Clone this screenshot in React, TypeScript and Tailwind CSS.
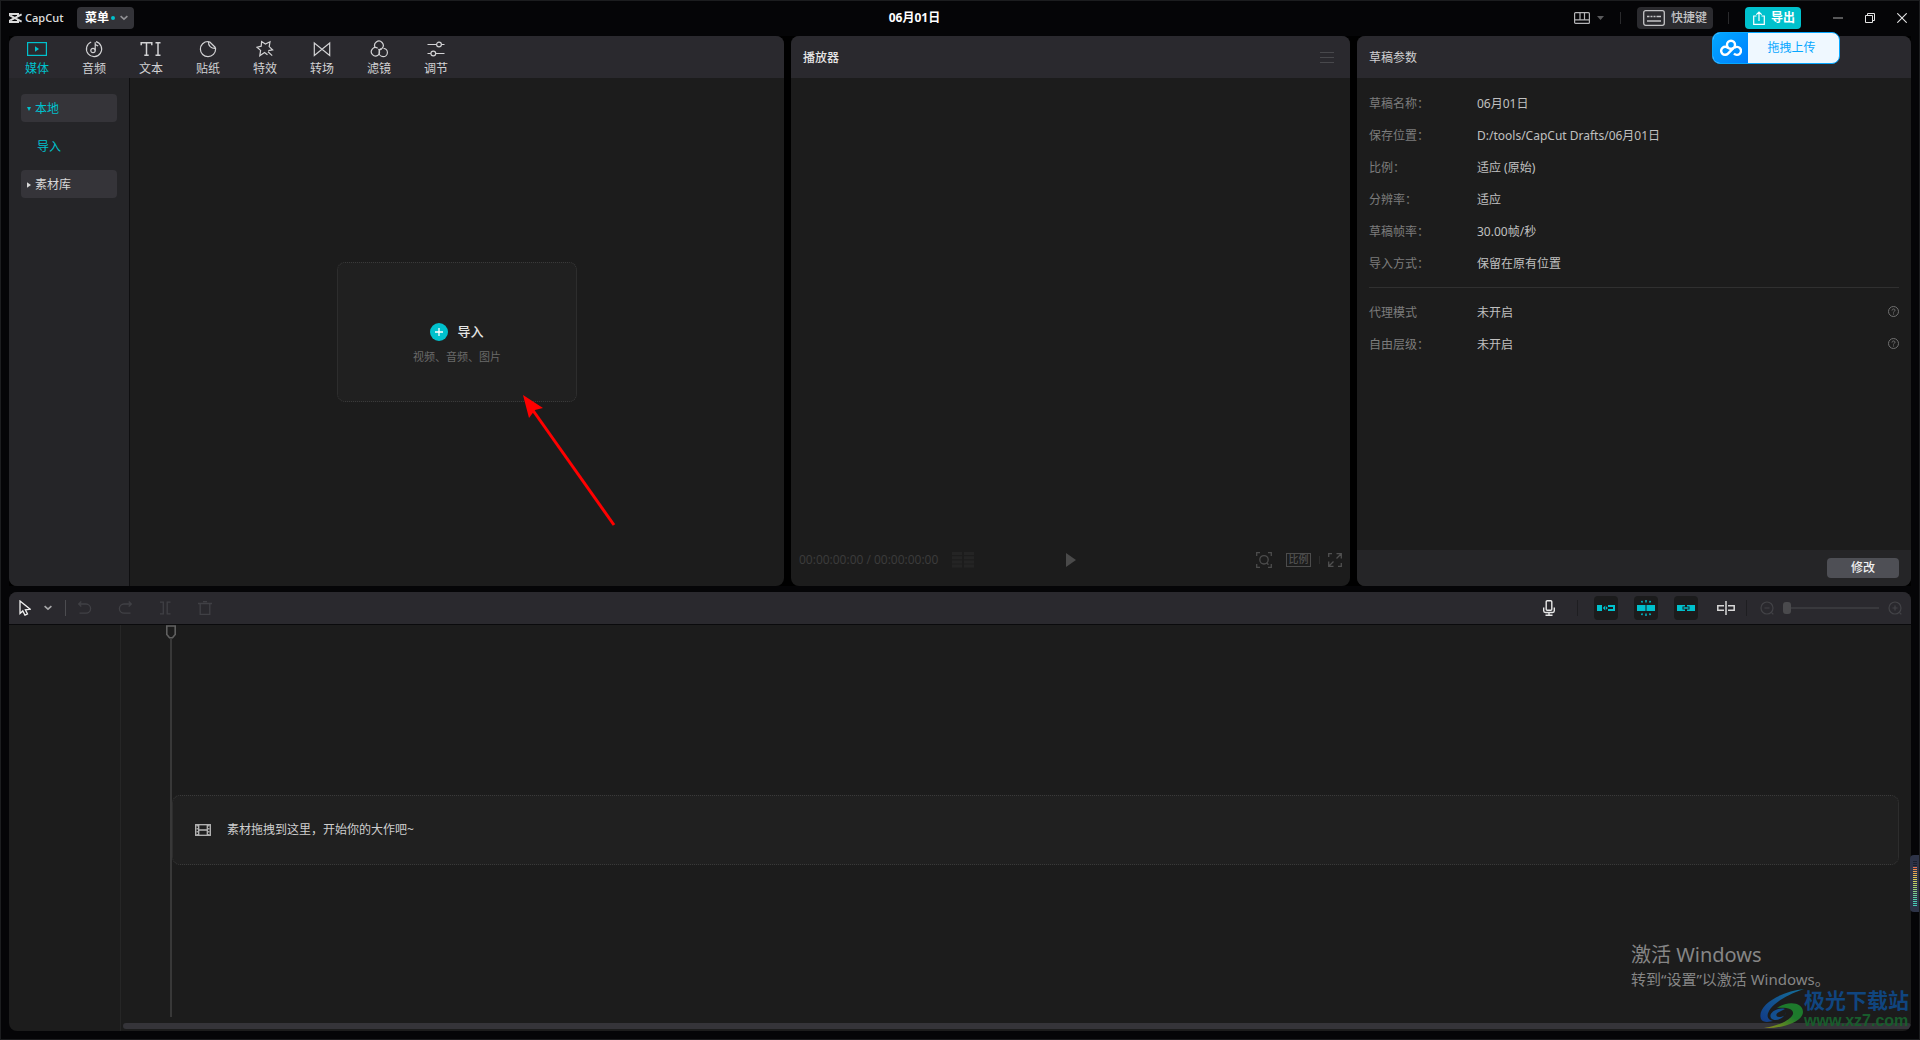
import { useState, type ReactNode } from "react";

const TABS = [
  { id: "media", label: "媒体" },
  { id: "audio", label: "音频" },
  { id: "text", label: "文本" },
  { id: "sticker", label: "贴纸" },
  { id: "effect", label: "特效" },
  { id: "transition", label: "转场" },
  { id: "filter", label: "滤镜" },
  { id: "adjust", label: "调节" },
];

const PARAMS = [
  ["草稿名称：", "06月01日"],
  ["保存位置：", "D:/tools/CapCut Drafts/06月01日"],
  ["比例：", "适应 (原始)"],
  ["分辨率：", "适应"],
  ["草稿帧率：", "30.00帧/秒"],
  ["导入方式：", "保留在原有位置"],
];

const EXTRA = [
  ["代理模式", "未开启"],
  ["自由层级：", "未开启"],
];

// level meter, top (off) to bottom
const METER = [
  "bg-[#1a1f2e]", "bg-[#1a1f2e]", "bg-[#1a1f2e]",
  "bg-[#e8714f]", "bg-[#e88a50]", "bg-[#e79c50]", "bg-[#e6ac50]", "bg-[#e3b852]", "bg-[#dfc255]",
  "bg-[#d8cb58]", "bg-[#cccf5c]", "bg-[#bfd062]", "bg-[#b2d069]", "bg-[#a4d071]", "bg-[#96cf7a]",
  "bg-[#88ce84]", "bg-[#7acd8e]", "bg-[#6ccd98]", "bg-[#5fcca2]", "bg-[#55ccaa]", "bg-[#4dccb0]",
  "bg-[#48ccb4]", "bg-[#44ccb8]",
];

export default function App() {
  return (
    <div className="relative flex h-screen flex-col overflow-hidden border border-[#1c1d1f] bg-[#050507] font-['Noto_Sans','Noto_Sans_CJK_SC',sans-serif] text-xs text-[#d8d8d8]">
      <TitleBar />
      <main className="flex min-h-0 flex-1 flex-col gap-1.5 px-2 pb-2">
        <div className="grid min-h-0 flex-[550] grid-cols-[775fr_559fr_554fr] gap-[7px] bg-black">
          <MediaPanel />
          <PlayerPanel />
          <ParamsPanel />
        </div>
        <Timeline />
      </main>
      <UploadWidget />
      <Pointer />
      <Meter />
      <ActivationNotice />
      <SiteMark />
    </div>
  );
}

function TitleBar() {
  return (
    <header className="grid h-[35px] shrink-0 grid-cols-[19fr_80px_21fr] items-center px-2 pb-px">
      <div className="flex items-center">
        <svg className="h-2.5 w-[13px]" viewBox="0 0 39 30" fill="none" stroke="#dcdcdc" strokeWidth="6">
          <path d="M2 10V3h25v7M2 20v7h25v-7" />
          <path d="M38 4 4 22M38 26 4 8" />
        </svg>
        <span className="ml-[3px] w-[38px] font-['Open_Sans',sans-serif] text-[11px] leading-4 font-semibold text-[#dcdcdc]">CapCut</span>
        <button className="ml-3.5 flex h-[22px] w-[57px] items-center rounded bg-[#333338] pl-2 font-bold text-white">
          菜单
          <span className="ml-0.5 size-1 rounded-full bg-[#00c1cd]" />
          <svg className="ml-[5px] h-1.5 w-2" viewBox="0 0 8 6" fill="none" stroke="#929296" strokeWidth="1.600">
            <path d="m.6 1.200 3.400 3 3.400-3" />
          </svg>
        </button>
      </div>
      <h1 className="text-center font-bold text-white">06月01日</h1>
      <div className="flex items-center justify-end">
        <button aria-label="布局" className="flex items-center gap-[7px]">
          <svg className="h-3 w-4" viewBox="0 0 16 12" fill="none" stroke="#b4b4b6" strokeWidth="1.200">
            <rect x=".6" y=".6" width="14.800" height="10.800" rx="1" />
            <path d="M.6 7.800h14.800M6 .6v7.200M10.500 .6v7.200" />
          </svg>
          <svg className="h-1 w-[7px]" viewBox="0 0 7 4" fill="#5a5a5c"><path d="M0 0h7L3.500 4z" /></svg>
        </button>
        <Divider className="mx-4 bg-[#2a2a2c]" />
        <button className="flex h-[22px] w-[76px] items-center rounded bg-[#2b2b2f] pl-1.5 font-medium text-[#c4c4c6]">
          <svg className="mr-1.5 h-4 w-[22px]" viewBox="0 0 22 16" fill="none" stroke="#c4c4c6" strokeWidth="1.300">
            <rect x=".7" y=".7" width="20.600" height="14.600" rx="2" />
            <path d="M4 6.500h2.500m1 0h2m1 0h2m1 0h4.500M4 11h14" />
          </svg>
          快捷键
        </button>
        <Divider className="ml-[15px] mr-4 bg-[#2a2a2c]" />
        <button className="flex h-[22px] w-14 items-center rounded bg-[#00c1cd] pl-2 font-bold text-white">
          <svg className="mr-1.5 h-3.5 w-3" viewBox="0 0 12 14" fill="none" stroke="#fff" strokeWidth="1.200">
            <path d="M3.500 5H.7v8.300h10.600V5H8.500M6 10V1.200M3.300 3.700 6 1l2.700 2.700" />
          </svg>
          导出
        </button>
        <div className="ml-8 mr-1 flex items-center gap-[22px]">
          <button aria-label="最小化">
            <svg className="size-2.5" viewBox="0 0 10 10" stroke="#7b7b7b" strokeWidth="1.400"><path d="M0 5h10" /></svg>
          </button>
          <button aria-label="还原">
            <svg className="size-2.5" viewBox="0 0 10 10" fill="none" stroke="#e4e4e4">
              <path d="M.5 2.500h7v7h-7zM2.500 2.500v-2h7v7h-2" />
            </svg>
          </button>
          <button aria-label="关闭">
            <svg className="size-2.5" viewBox="0 0 10 10" stroke="#e4e4e4" strokeWidth="1.100"><path d="m.3.3 9.400 9.400M9.700.3.3 9.700" /></svg>
          </button>
        </div>
      </div>
    </header>
  );
}

function Divider({ className }: { className: string }) {
  return <span className={`h-3 w-px shrink-0 ${className}`} />;
}

function MediaPanel() {
  const [tab, setTab] = useState("media");

  return (
    <section className="flex min-h-0 flex-col overflow-hidden rounded-lg bg-[#1c1c1c]">
      <nav className="flex h-[42px] shrink-0 bg-[#2a292e]">
        {TABS.map(t => (
          <button
            key={t.id}
            onClick={() => setTab(t.id)}
            className={`flex w-[57px] flex-col items-center pt-1 pr-px ${tab === t.id ? "text-[#00c1cd]" : "text-[#d2d2d4]"}`}
          >
            <TabIcon id={t.id} />
            <span className="leading-[22px]">{t.label}</span>
          </button>
        ))}
      </nav>
      <div className="flex min-h-0 flex-1">
        <aside className="w-[121px] shrink-0 border-r border-[#0e0e10] bg-[#252528] px-3 pt-4">
          <button className="flex h-7 w-full items-center gap-1 rounded bg-[#353439] pt-px pl-1.5 text-[#00c1cd]">
            <svg className="size-1" viewBox="0 0 4 4" fill="currentColor"><path d="M0 0h4L2 4z" /></svg>
            本地
          </button>
          <button className="flex h-12 w-full items-center pt-px pl-4 text-[#00c1cd]">导入</button>
          <button className="flex h-7 w-full items-center gap-1 rounded bg-[#353439] pt-px pl-1.5 text-[#d8d8d8]">
            <svg className="size-1 overflow-visible" viewBox="0 0 4 4" fill="currentColor"><path d="M0-.7 4 2 0 4.700z" /></svg>
            素材库
          </button>
        </aside>
        <div className="flex flex-1 items-center justify-center">
          <button className="flex h-[140px] w-60 flex-col items-center rounded-lg border border-dotted border-[#3a3a3a] bg-[#202020] pt-[60px]">
            <span className="flex h-[18px] items-center gap-[9px] text-[13px] font-medium text-[#e6e6e6]">
              <svg className="size-[18px]" viewBox="0 0 18 18">
                <circle cx="9" cy="9" r="9" fill="#00c1cd" />
                <path d="M9 5v8M5 9h8" stroke="#fff" strokeWidth="1.300" />
              </svg>
              导入
            </span>
            <span className="mt-2 text-[11px] leading-4 text-[#6a6a6a]">视频、音频、图片</span>
          </button>
        </div>
      </div>
    </section>
  );
}

function TabIcon({ id }: { id: string }) {
  const icons: Record<string, ReactNode> = {
    media: (
      <>
        <rect x="1.600" y="2.600" width="18.800" height="12.800" />
        <path d="M9 6.200v5.600L13 9z" fill="currentColor" stroke="none" />
      </>
    ),
    audio: (
      <>
        <path d="M13 1.700A7.600 7.600 0 1 1 8.200 2" />
        <circle cx="10" cy="10.500" r="2.200" />
        <path d="M12.200 10.500V2.200M12.200 4.500l3 1.500" />
      </>
    ),
    text: (
      <path d="M1.200 5.200V2.800h10.600v2.400M6.500 2.800v12.400M4.300 15.200h4.400M15.500 2.800h5M15.500 15.200h5M18 2.800v12.400" strokeWidth="1.500" />
    ),
    sticker: (
      <path d="M11 1.500A7.600 7.600 0 1 0 18.600 9c0-.8-.2-1.300-.5-1.800L12.800 2c-.6-.3-1.200-.5-1.800-.5ZM11.500 1.600c-.4 4 2.500 7 7 6.800" />
    ),
    effect: (
      <path d="M13.500 14.800 10.500 12.600 5.800 15.800 6.600 10.400 3 7.200 7.200 6.200 7.600 1.600 11.400 4 16 1.800 15.200 6.600 18.600 9.800 14.300 10.600M14 11.800l4.200 3.800" />
    ),
    transition: <path d="M3.300 3v12.400L18.700 3v12.400z" />,
    filter: (
      <>
        <path d="M7.200 7.600A4.300 4.300 0 1 1 14.200 8.200C13.400 9.500 12 10 10.800 9.900" />
        <path d="M9.700 8.200A4.200 4.200 0 1 0 10 15.200M11 12.500a4.200 4.200 0 1 0 4.500-4.200" />
        <path d="M10 15.200c1.800-1.400 2.200-4.200.5-6.200M11 12.500c0-2 1-3.600 2.500-4" />
      </>
    ),
    adjust: (
      <>
        <path d="M2.500 4.500h9M16.500 4.500h3M2.500 13.500h3.300M10.800 13.500h8.700" />
        <circle cx="14" cy="4.500" r="2.400" />
        <circle cx="8.300" cy="13.500" r="2.400" />
      </>
    ),
  };

  return (
    <svg className="h-[18px] w-[22px] shrink-0" viewBox="0 0 22 18" fill="none" stroke="currentColor" strokeWidth="1.200">
      {icons[id]}
    </svg>
  );
}

function PlayerPanel() {
  return (
    <section className="flex min-h-0 flex-col overflow-hidden rounded-lg bg-[#1c1c1c]">
      <div className="flex h-[42px] shrink-0 items-center justify-between bg-[#2a292e] pt-px pl-3 pr-4">
        <h2 className="font-medium text-[#e6e6e6]">播放器</h2>
        <button aria-label="播放器菜单">
          <svg className="h-3 w-3.5" viewBox="0 0 14 12" stroke="#48484c"><path d="M0 .5h14M0 5.500h14M0 10.500h14" /></svg>
        </button>
      </div>
      <div className="flex-1" />
      <div className="grid h-[52px] shrink-0 grid-cols-[1fr_auto_1fr] items-center pb-px pl-2 pr-2 text-[#3c3c3c]">
        <div className="flex items-center gap-3.5">
          <span className="font-['Open_Sans',sans-serif]">00:00:00:00 / 00:00:00:00</span>
          <svg className="h-4 w-[22px]" viewBox="0 0 22 16" stroke="#242424" strokeWidth="3">
            <path d="M0 1.500h10M0 5.700h10M0 9.900h10M0 14.100h10M12 1.500h10M12 5.700h10M12 9.900h10M12 14.100h10" />
          </svg>
        </div>
        <button aria-label="播放">
          <svg className="h-3.5 w-2.5" viewBox="0 0 10 14" fill="#4a4a4a"><path d="M0 0v14l10-7z" /></svg>
        </button>
        <div className="flex items-center justify-end">
          <button aria-label="缩放画面">
            <svg className="size-4" viewBox="0 0 16 16" fill="none" stroke="#4c4c4c" strokeWidth="1.300">
              <path d="M.7 4V.7H4M12 .7h3.300V4M.7 12v3.300H4M12 15.300h3.300V12" />
              <circle cx="8" cy="7.800" r="4.200" />
              <path d="m10.500 10.800 2 2" />
            </svg>
          </button>
          <button className="ml-3.5 flex h-3.5 w-[25px] items-center justify-center border border-[#4c4c4c] text-[10px] font-medium text-[#505050]">比例</button>
          <span className="mx-2 h-2 w-px bg-[#2c2c2c]" />
          <button aria-label="全屏">
            <svg className="size-3.5" viewBox="0 0 14 14" fill="none" stroke="#505050" strokeWidth="1.300">
              <path d="M.7 4V.7H4M10 13.300h3.300V10M8.500.7h4.800v4.800M5.500 13.300H.7V8.500M13 1 8.500 5.500M1 13l4.500-4.500" />
            </svg>
          </button>
        </div>
      </div>
    </section>
  );
}

function ParamsPanel() {
  return (
    <section className="flex min-h-0 flex-col overflow-hidden rounded-lg bg-[#1c1c1c]">
      <div className="flex h-[42px] shrink-0 items-center bg-[#2a292e] px-3 pt-px">
        <h2 className="text-[#d0d0d2]">草稿参数</h2>
      </div>
      <div className="flex-1 px-3 pt-2.5">
        <dl>
          {PARAMS.map(([k, v]) => (
            <div key={k} className="flex h-8 items-center">
              <dt className="w-[108px] text-[#7c7c7c]">{k}</dt>
              <dd className="text-[#c0c0c0]">{v}</dd>
            </div>
          ))}
        </dl>
        <hr className="mt-[7px] mb-[9px] border-[#303030]" />
        <dl>
          {EXTRA.map(([k, v]) => (
            <div key={k} className="flex h-8 items-center">
              <dt className="w-[108px] text-[#7c7c7c]">{k}</dt>
              <dd className="flex-1 text-[#c0c0c0]">{v}</dd>
              <dd>
                <button aria-label="说明" className="mb-1 block">
                  <svg className="size-[11px]" viewBox="0 0 11 11" fill="none" stroke="#707070">
                    <circle cx="5.500" cy="5.500" r="5" />
                    <path d="M4 4.500c0-2 3-2 3-.2 0 1-1.500 1-1.500 2.200M5.500 7.500v1" />
                  </svg>
                </button>
              </dd>
            </div>
          ))}
        </dl>
      </div>
      <div className="flex h-9 shrink-0 items-center justify-end bg-[#252527] px-3">
        <button className="h-5 w-[72px] rounded bg-[#4e4f55] leading-5 font-medium text-[#f0f0f0]">修改</button>
      </div>
    </section>
  );
}

function Timeline() {
  const [zoom, setZoom] = useState(0);

  return (
    <section className="flex min-h-0 flex-[439] flex-col overflow-hidden rounded-lg bg-[#1c1c1c]">
      <div className="flex h-[33px] shrink-0 items-center justify-between border-b border-[#0a0a0c] bg-[#2a292e] pl-2.5 pr-[9px]">
        <div className="flex items-center text-[#404045]">
          <button aria-label="选择">
            <svg className="h-4 w-3" viewBox="0 0 12 16" fill="none" stroke="#f0f0f0" strokeWidth="1.300">
              <path d="M1 1v12.500l2.800-2.600 2.200 4.300 2.500-1.200-2.100-4.200 4.800-.5z" />
            </svg>
          </button>
          <button aria-label="更多工具" className="ml-[13px]">
            <svg className="h-1.5 w-2" viewBox="0 0 8 6" fill="none" stroke="#a8a8aa" strokeWidth="1.600"><path d="m.6 1.200 3.400 3 3.400-3" /></svg>
          </button>
          <span className="ml-[13px] h-4 w-px bg-[#4c4c50]" />
          <div className="ml-3 flex gap-[26px]">
            <button aria-label="撤销">
              <svg className="size-3.5" viewBox="0 0 14 14" fill="none" stroke="currentColor" strokeWidth="1.300">
                <path d="M.8 3H8a4.600 4.600 0 0 1 0 9.200H1.500M3.300 .6.6 3l2.700 2.400" />
              </svg>
            </button>
            <button aria-label="重做">
              <svg className="size-3.5" viewBox="0 0 14 14" fill="none" stroke="currentColor" strokeWidth="1.300">
                <path d="M13.200 3H6a4.600 4.600 0 0 0 0 9.200h6.500M10.700 .6 13.400 3l-2.700 2.400" />
              </svg>
            </button>
            <button aria-label="分割">
              <svg className="size-3.5" viewBox="0 0 14 14" fill="none" stroke="currentColor" strokeWidth="1.300">
                <path d="M2 1.200h3.300v11.600H2M12.500 1.200H9.200v11.600h3.300" />
              </svg>
            </button>
            <button aria-label="删除">
              <svg className="size-3.5" viewBox="0 0 14 14" fill="none" stroke="currentColor" strokeWidth="1.300">
                <path d="M0 2.500h14M5 .7h4M2.200 2.500v10.800h9.600V2.500" />
              </svg>
            </button>
          </div>
        </div>

        <div className="flex items-center">
          <button aria-label="录音">
            <svg className="h-4 w-3" viewBox="0 0 12 16" fill="none" stroke="#e8e8e8" strokeWidth="1.400">
              <rect x="3.200" y=".7" width="5.600" height="9.600" rx="1" />
              <path d="M.7 7.500v3.300q0 1.700 1.700 1.700h7.200q1.700 0 1.700-1.700V7.500M6 12.500v2.800M2.500 15.300h7" />
            </svg>
          </button>
          <span className="ml-[22px] h-4 w-px bg-[#1e1e21]" />
          <div className="ml-4 flex gap-4">
            <ToolToggle label="主轨磁吸">
              <rect x="0" y="6" width="5" height="6" fill="currentColor" />
              <path d="M5.800 9l2.500-2.500v5zM9 7.200 10.800 9 9 10.800z" fill="currentColor" />
              <path d="M11 7h6v4h-6" fill="none" stroke="currentColor" strokeWidth="2" />
            </ToolToggle>
            <ToolToggle label="自动吸附">
              <path d="M0 6h8.500v6H0zM9.500 6H18v6H9.500z" fill="currentColor" />
              <path d="M9 1v2.500M9 14.500V17M4.500 2l1 1.500M13.500 2l-1 1.500M4.500 16l1-1.500M13.500 16l-1-1.500" fill="none" stroke="currentColor" strokeWidth="1.400" />
            </ToolToggle>
            <ToolToggle label="联动">
              <path d="M0 6h8v1.500H5.500v3H8V12H0zM18 6h-8v1.500h2.500v3H10V12h8zM6.500 8.300h5v1.400h-5z" fill="currentColor" />
            </ToolToggle>
          </div>
          <button aria-label="预览轴" className="ml-[19px]">
            <svg className="h-3.5 w-[18px]" viewBox="0 0 18 14" fill="none" stroke="#d8d8d8" strokeWidth="1.500">
              <path d="M7 4.700H.8v4.600H7M11 4.700h6.200v4.600H11M9 0v14" />
            </svg>
          </button>
          <span className="ml-[11px] h-4 w-px bg-[#1e1e21]" />
          <button aria-label="缩小" className="ml-[13px]"><ZoomIcon d="M4.500 7h5" /></button>
          <input
            type="range"
            aria-label="时间线缩放"
            value={zoom}
            onChange={e => setZoom(Number(e.target.value))}
            className="mx-[9px] h-3 w-24 appearance-none bg-[linear-gradient(#39393d,#39393d)] bg-[length:100%_2px] bg-center bg-no-repeat [&::-webkit-slider-thumb]:h-3 [&::-webkit-slider-thumb]:w-2 [&::-webkit-slider-thumb]:appearance-none [&::-webkit-slider-thumb]:rounded-[3px] [&::-webkit-slider-thumb]:bg-[#4a4a4d]"
          />
          <button aria-label="放大"><ZoomIcon d="M4.500 7h5M7 4.500v5" /></button>
        </div>
      </div>

      <div className="flex min-h-0 flex-1">
        <div className="w-28 shrink-0 border-r border-[#262626]" />
        <div className="flex min-w-0 flex-1 flex-col pl-0.5">
          <div className="flex min-h-0 flex-1 pl-[43px] pr-3">
            {/* playhead */}
            <div className="-mr-1 flex w-2.5 shrink-0 flex-col items-center pb-1.5">
              <svg className="h-3.5 w-2.5 shrink-0" viewBox="0 0 10 14" fill="none" stroke="#606060" strokeWidth="1.600">
                <path d="M.8 1h8.400v8.500L6.500 12.800h-3L.8 9.500z" />
              </svg>
              <span className="w-0.5 flex-1 bg-[#383838]" />
            </div>
            <div className="flex min-w-0 flex-1 flex-col">
              <div className="flex-[170]" />
              <div className="flex h-[70px] shrink-0 items-center rounded-lg border border-dotted border-[#3a3a3a] bg-[#202020] pl-[22px] text-[#cfcfcf]">
                <svg className="mr-4 h-3 w-4" viewBox="0 0 16 12" fill="none" stroke="#b8b8b8" strokeWidth="1.300">
                  <rect x=".7" y=".7" width="14.600" height="10.600" />
                  <path d="M3.700.7v10.600M12.300.7v10.600M3.700 6h8.600" />
                  <path d="M2.200 1v10M13.800 1v10" strokeDasharray="1.500 1.500" />
                </svg>
                素材拖拽到这里，开始你的大作吧~
              </div>
              <div className="flex-[158]" />
            </div>
          </div>
          <div className="mb-0.5 h-1.5 shrink-0 rounded-full bg-[#353439]" />
        </div>
      </div>
    </section>
  );
}

function ToolToggle({ label, children }: { label: string; children: ReactNode }) {
  return (
    <button aria-label={label} className="flex size-6 items-center justify-center rounded bg-[#1b1b1c] text-[#00c1cd]">
      <svg className="size-[18px]" viewBox="0 0 18 18">{children}</svg>
    </button>
  );
}

function ZoomIcon({ d }: { d: string }) {
  return (
    <svg className="size-3.5" viewBox="0 0 14 14" fill="none" stroke="#434347" strokeWidth="1.200">
      <circle cx="7" cy="7" r="6" />
      <path d={d} />
      <path d="m11.300 11.300 2 2" />
    </svg>
  );
}

function UploadWidget() {
  return (
    <button className="absolute top-[31px] right-[79px] flex h-8 w-32 overflow-hidden rounded-lg border border-[#06a7ff] bg-[#eff8ff] text-[#06a7ff]">
      <span className="flex h-full w-[35px] items-center justify-center bg-linear-to-br from-[#06a7ff] to-[#0180ff]">
        <svg className="h-[18px] w-[22px]" viewBox="0 0 22 18" fill="none" stroke="#fff" strokeWidth="2.400">
          <circle cx="11" cy="5.700" r="4" />
          <path d="M13.600 8.800 8 14.600a4 4 0 1 1 .2-5.400M14 14.500a4 4 0 1 0 .2-5.500" />
        </svg>
      </span>
      <span className="flex h-full flex-1 items-center justify-center pr-1">拖拽上传</span>
    </button>
  );
}

function Pointer() {
  return (
    <svg className="pointer-events-none absolute top-[394px] left-[522px] h-[132px] w-[94px]" viewBox="0 0 94 132" fill="#f00">
      <path d="M0 0 20 13 12 15 6 23z" />
      <path d="m9 14 82 116" stroke="#f00" strokeWidth="3" />
    </svg>
  );
}

function Meter() {
  return (
    <div className="absolute right-0 bottom-[127px] flex h-[57px] w-[9px] flex-col items-center gap-px rounded-l-sm bg-[#2d3347] pt-1.5">
      {METER.map((c, i) => (
        <span key={i} className={`h-px w-1 ${c}`} />
      ))}
    </div>
  );
}

function ActivationNotice() {
  return (
    <div className="pointer-events-none absolute right-[90px] bottom-12 w-[198px] whitespace-nowrap text-[#868686]">
      <p className="text-xl leading-6">激活 Windows</p>
      <p className="text-[15px] leading-6">转到“设置”以激活 Windows。</p>
    </div>
  );
}

function SiteMark() {
  return (
    <div className="pointer-events-none absolute right-2 bottom-[9px] flex items-center">
      <svg className="h-10 w-11" viewBox="0 0 44 40">
        <defs>
          <linearGradient id="sky" x1="0" y1="1" x2="1" y2="0">
            <stop offset="0" stopColor="#123a86" />
            <stop offset="1" stopColor="#14719b" />
          </linearGradient>
          <linearGradient id="leaf" x1="0" y1="1" x2="1" y2="0">
            <stop offset="0" stopColor="#96901c" />
            <stop offset=".6" stopColor="#1d7a2c" />
          </linearGradient>
        </defs>
        <path d="M44 0C22 2-4 16 1 30c2 4 8 3 12 2C1 30 8 12 44 0Z" fill="url(#sky)" />
        <path d="M25 20c-8-2-17 4-14 9 4 5 14 0 15-6 0 3-3 5-7 5-3 0-4-3 0-5 2-1 4-2 6-3Z" fill="#134f8f" />
        <path d="M17 19c12-8 26-5 26 4 0 10-22 17-39 16 14-2 27-8 29-14 1-5-6-7-16-6Z" fill="url(#leaf)" />
      </svg>
      <div className="w-[107px] whitespace-nowrap">
        <p className="text-[21px] leading-6 font-bold text-[#10457f]">极光下载站</p>
        <p className="font-['Liberation_Sans',sans-serif] text-base leading-[18px] font-bold text-[#185c2c]">www.xz7.com</p>
      </div>
    </div>
  );
}
